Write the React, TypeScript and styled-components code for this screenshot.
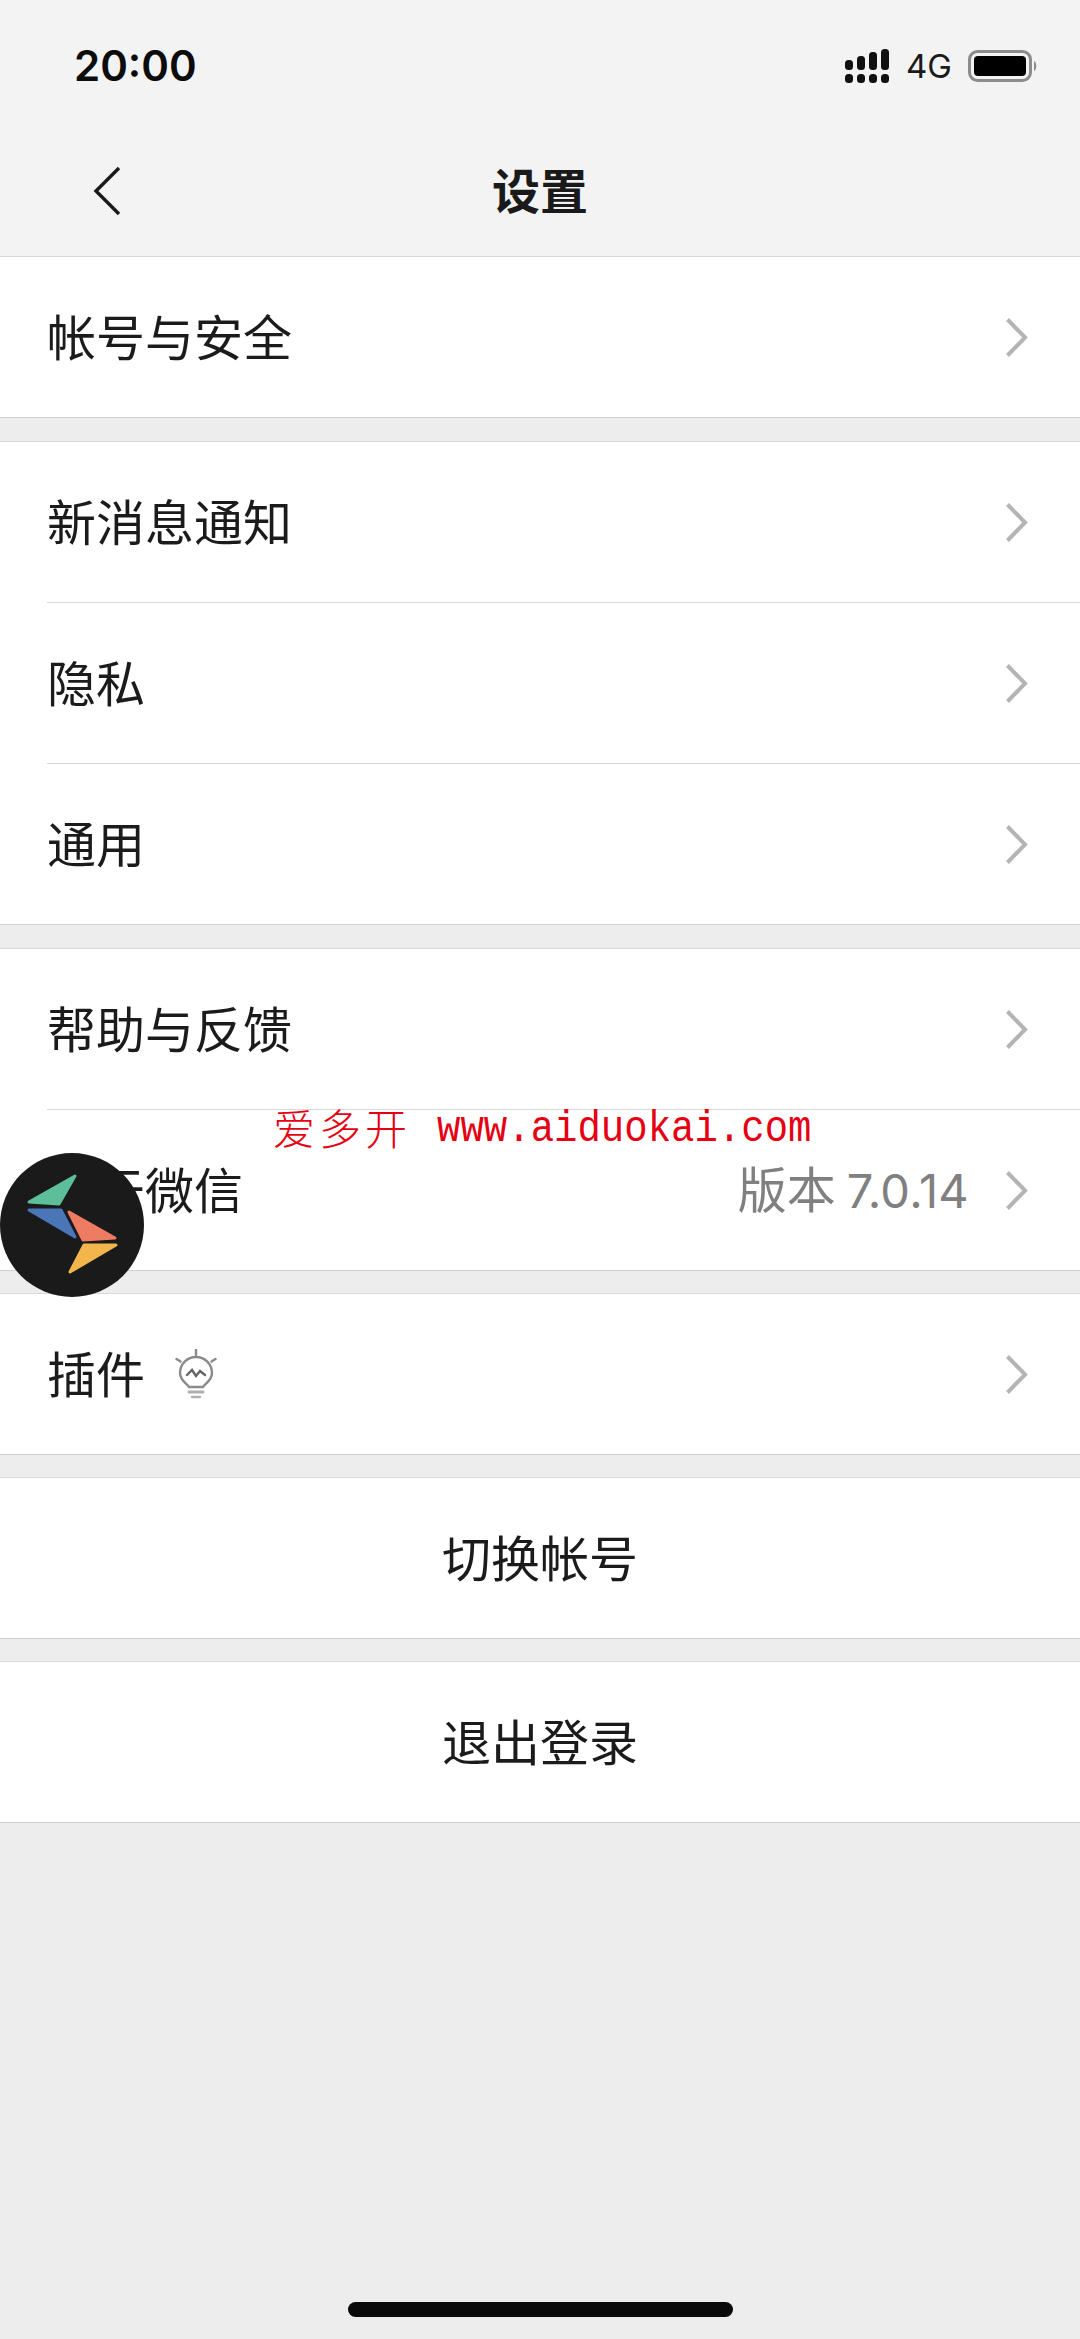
import React from "react";
import styled, { createGlobalStyle } from "styled-components";

const Global = createGlobalStyle`
  html, body { margin: 0; padding: 0; background: #ededed; }
  * { box-sizing: border-box; }
`;

const CJK = `"Noto Sans CJK SC", "Noto Sans", sans-serif`;

const Page = styled.div`
  position: relative;
  width: 1080px;
  height: 2339px;
  overflow: hidden;
  display: flex;
  flex-direction: column;
  background: #ededed;
  font-family: ${CJK};
  color: #1b1b1b;
`;

const Header = styled.header`
  height: 256px;
  background: #f3f3f3;
  display: flex;
  flex-direction: column;
`;

const StatusBar = styled.div`
  height: 132px;
  padding: 0 42px 0 74px;
  display: flex;
  align-items: center;
  justify-content: space-between;
`;

const Time = styled.span`
  font-family: Inter, "Liberation Sans", sans-serif;
  font-size: 42px;
  font-weight: 600;
  line-height: 1;
  color: #0c0c0c;
`;

const StatusIcons = styled.div`
  display: flex;
  align-items: center;
  gap: 16px;
`;

const Net = styled.span`
  font-family: Inter, "Liberation Sans", sans-serif;
  font-size: 33px;
  line-height: 1;
  color: #1a1a1a;
`;

const NavBar = styled.div`
  flex: 1;
  position: relative;
  display: flex;
  align-items: center;
  justify-content: center;
  padding-bottom: 12px;
`;

const BackIcon = styled.svg`
  position: absolute;
  left: 92px;
  top: 34px;
`;

const Title = styled.h1`
  margin: 0;
  font-size: 48px;
  font-weight: 700;
  line-height: 1;
  color: #1a1a1a;
`;

const Group = styled.section<{ $gap?: number }>`
  background: #fff;
  border-top: 1px solid #d9d9d9;
  border-bottom: 1px solid #d0d0d0;
  margin-top: ${(p) => p.$gap ?? 0}px;
`;

const Row = styled.div<{ $center?: boolean; $divider?: boolean }>`
  position: relative;
  height: ${(p) => (p.$divider ? 161 : 160)}px;
  padding: ${(p) => (p.$center ? "0" : "0 52px 0 47px")};
  display: flex;
  align-items: center;
  justify-content: ${(p) => (p.$center ? "center" : "flex-start")};
  ${(p) =>
    p.$divider
      ? `&::after {
          content: "";
          position: absolute;
          left: 47px;
          right: 0;
          bottom: 0;
          height: 1px;
          background: #d8d8d8;
        }`
      : ""}
`;

const Label = styled.span`
  font-size: 49px;
  font-weight: 400;
  line-height: 1;
  margin-bottom: 6px;
  color: #1b1b1b;
`;

const Bulb = styled.svg`
  margin-left: 30px;
`;

const Value = styled.span`
  margin-left: auto;
  margin-right: 36px;
  margin-bottom: 4px;
  font-size: 49px;
  line-height: 1;
  color: #808080;
`;

const ValueNumber = styled.span`
  font-family: Inter, "Liberation Sans", sans-serif;
  font-size: 47px;
  letter-spacing: 0.3px;
`;

const Chevron = styled.svg<{ $auto?: boolean }>`
  margin-left: ${(p) => (p.$auto ? "auto" : "0")};
  flex: none;
`;

const Watermark = styled.div`
  position: absolute;
  left: 273px;
  top: 1106px;
  display: flex;
  align-items: center;
  gap: 26px;
  color: #e60012;
  white-space: nowrap;
  line-height: 1;
`;

const WatermarkCn = styled.span`
  font-family: "Noto Sans CJK SC", serif;
  font-weight: 300;
  font-size: 42px;
  letter-spacing: 4px;
`;

const WatermarkEn = styled.span`
  display: inline-block;
  font-family: "Liberation Mono", monospace;
  font-size: 39px;
  transform: translateY(3px) scaleY(1.14);
`;

const FloatBall = styled.svg`
  position: absolute;
  left: 0;
  top: 1153px;
`;

const HomeBar = styled.div`
  position: absolute;
  left: 348px;
  top: 2302px;
  width: 385px;
  height: 15px;
  border-radius: 8px;
  background: #0a0a0a;
`;

const SignalIcon = () => (
  <svg width="46" height="36" viewBox="0 0 46 36">
    <g fill="#111">
      <rect x="1" y="12" width="8" height="10" rx="3.5" />
      <rect x="13" y="8" width="8" height="14" rx="3.5" />
      <rect x="25" y="4" width="8" height="18" rx="3.5" />
      <rect x="37" y="1" width="8" height="21" rx="3.5" />
      <rect x="1" y="26" width="8" height="9" rx="3.5" />
      <rect x="13" y="26" width="8" height="9" rx="3.5" />
      <rect x="25" y="26" width="8" height="9" rx="3.5" />
      <rect x="37" y="26" width="8" height="9" rx="3.5" />
    </g>
  </svg>
);

const BatteryIcon = () => (
  <svg width="70" height="32" viewBox="0 0 70 32">
    <rect x="1.5" y="1.5" width="61" height="29" rx="8" fill="none" stroke="#8c8c8c" strokeWidth="3" />
    <rect x="6" y="6" width="52" height="20" rx="4" fill="#000" />
    <path d="M66 11 C69 12 69 20 66 21 Z" fill="#8c8c8c" />
  </svg>
);

const ChevronIcon = ({ auto }: { auto?: boolean }) => (
  <Chevron $auto={auto} width="23" height="39" viewBox="0 0 23 39">
    <path d="M2.5 1.5 L20 19.5 L2.5 37.5" fill="none" stroke="#b4b4b4" strokeWidth="4" />
  </Chevron>
);

type Item = { label: string; value?: [string, string]; bulb?: boolean };

const groups: { gap: number; items: Item[] }[] = [
  { gap: 0, items: [{ label: "帐号与安全" }] },
  { gap: 23, items: [{ label: "新消息通知" }, { label: "隐私" }, { label: "通用" }] },
  { gap: 23, items: [{ label: "帮助与反馈" }, { label: "关于微信", value: ["版本 ", "7.0.14"] }] },
  { gap: 22, items: [{ label: "插件", bulb: true }] },
];

export default function App() {
  return (
    <Page>
      <Global />
      <Header>
        <StatusBar>
          <Time>20:00</Time>
          <StatusIcons>
            <SignalIcon />
            <Net>4G</Net>
            <BatteryIcon />
          </StatusIcons>
        </StatusBar>
        <NavBar>
          <BackIcon width="30" height="50" viewBox="0 0 30 50">
            <path d="M27 2 L4 25 L27 48" fill="none" stroke="#1a1a1a" strokeWidth="3.4" />
          </BackIcon>
          <Title>设置</Title>
        </NavBar>
      </Header>
      {groups.map((group, gi) => (
        <Group key={gi} $gap={group.gap}>
          {group.items.map((item, ii) => (
            <Row key={item.label} $divider={ii < group.items.length - 1}>
              <Label>{item.label}</Label>
              {item.bulb && (
                <Bulb width="42" height="50" viewBox="0 0 42 50">
                  <g fill="none" stroke="#8a8a8a" strokeWidth="2.4" strokeLinecap="round">
                    <path d="M21 1 V6" />
                    <path d="M1.5 10 L5.5 12.5" />
                    <path d="M40.5 10 L36.5 12.5" />
                    <path d="M14 38 C11 34 5 31 5 24 A16 16 0 0 1 37 24 C37 31 31 34 28 38 Z" />
                    <path d="M12 26 L17 21 L21 27 L25 22 L30 26" stroke="#666" />
                    <path d="M14 43 H28" strokeWidth="3" stroke="#b0b0b0" />
                    <path d="M17 48 H25" stroke="#b0b0b0" />
                  </g>
                </Bulb>
              )}
              {item.value && (
                <Value>
                  {item.value[0]}
                  <ValueNumber>{item.value[1]}</ValueNumber>
                </Value>
              )}
              <ChevronIcon auto={!item.value} />
            </Row>
          ))}
        </Group>
      ))}
      <Group $gap={22}>
        <Row $center>
          <Label>切换帐号</Label>
        </Row>
      </Group>
      <Group $gap={22}>
        <Row $center>
          <Label>退出登录</Label>
        </Row>
      </Group>
      <Watermark>
        <WatermarkCn>爱多开</WatermarkCn>
        <WatermarkEn>www.aiduokai.com</WatermarkEn>
      </Watermark>
      <FloatBall width="144" height="144" viewBox="0 0 144 144">
        <circle cx="72" cy="72" r="72" fill="#1a1a1a" />
        <g strokeLinejoin="round" strokeWidth="3">
          <path d="M75 23 L29 49 L59 51 Z" fill="#5dbf9a" stroke="#5dbf9a" />
          <path d="M29 57 L61 57 L75 84 Z" fill="#4a76b8" stroke="#4a76b8" />
          <path d="M69 59 L115 85 L83 87 Z" fill="#ee7c62" stroke="#ee7c62" />
          <path d="M84 92 L116 92 L70 119 Z" fill="#f2b64c" stroke="#f2b64c" />
        </g>
      </FloatBall>
      <HomeBar />
    </Page>
  );
}
